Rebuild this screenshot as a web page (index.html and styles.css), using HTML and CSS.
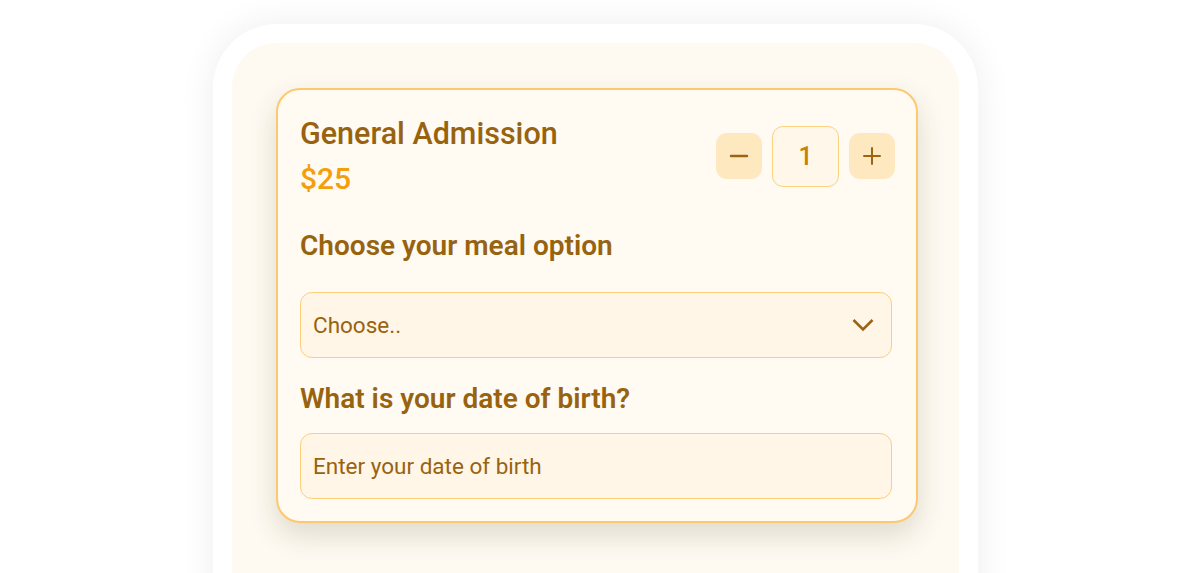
FILE: index.html
```html
<!DOCTYPE html>
<html lang="en">
<head>
<meta charset="utf-8">
<title>Ticket</title>
<link rel="stylesheet" href="styles.css">
</head>
<body>
<div class="frame">
  <div class="panel">
    <div class="card">
      <div class="head">
        <div class="info">
          <div class="title">General Admission</div>
          <div class="price">$25</div>
        </div>
        <div class="stepper">
          <button class="step" aria-label="decrease">
            <svg width="20" height="20" viewBox="0 0 20 20"><path d="M2 10h16" stroke="#9a6414" stroke-width="2.4" stroke-linecap="round"/></svg>
          </button>
          <div class="count">1</div>
          <button class="step" aria-label="increase">
            <svg width="20" height="20" viewBox="0 0 20 20"><path d="M2 10h16M10 2v16" stroke="#9a6414" stroke-width="2" stroke-linecap="round"/></svg>
          </button>
        </div>
      </div>
      <div class="label meal">Choose your meal option</div>
      <div class="field select">
        <span>Choose..</span>
        <svg width="24" height="16" viewBox="0 0 24 16"><path d="M2.5 3l9.5 9.5L21.5 3" fill="none" stroke="#9a6414" stroke-width="2.6" stroke-linejoin="miter"/></svg>
      </div>
      <div class="label dob">What is your date of birth?</div>
      <div class="field input"><span>Enter your date of birth</span></div>
    </div>
  </div>
</div>
</body>
</html>
```
FILE: styles.css
```css
html, body {
  margin: 0;
  padding: 0;
  background: #ffffff;
  font-family: Roboto, "Liberation Sans", sans-serif;
  overflow: hidden;
  height: 573px;
}
.frame {
  width: 765px;
  margin: 24px auto 0;
  height: 640px;
  box-sizing: border-box;
  padding: 19px 19px 0;
  background: #ffffff;
  border-radius: 64px;
  box-shadow: 0 0 36px rgba(0, 0, 0, 0.07);
}
.panel {
  height: 100%;
  box-sizing: border-box;
  background: #fefaf1;
  border-radius: 44px;
  padding: 45px 41px 0 44px;
}
.card {
  background: #fffaf2;
  border: 2px solid #fdc86e;
  border-radius: 24px;
  padding: 26px 24px 22px 22px;
  box-shadow: 0 12px 28px rgba(60, 50, 20, 0.16);
}
.head {
  display: flex;
  align-items: center;
  justify-content: space-between;
}
.title {
  font-size: 30.5px;
  font-weight: 500;
  color: #98630f;
  line-height: 35px;
}
.price {
  font-size: 30px;
  font-weight: 500;
  color: #f59e0b;
  line-height: 35px;
  margin-top: 10px;
}
.stepper {
  display: flex;
  align-items: center;
  gap: 10px;
  margin-right: -3px;
}
.step {
  width: 46px;
  height: 46px;
  border: none;
  border-radius: 11px;
  background: #fee8c0;
  display: flex;
  align-items: center;
  justify-content: center;
  padding: 0;
}
.count {
  width: 67px;
  height: 61px;
  box-sizing: border-box;
  border: 1.5px solid #fdd27f;
  border-radius: 11px;
  background: #fff7e9;
  display: flex;
  align-items: center;
  justify-content: center;
  font-size: 25px;
  font-weight: 500;
  color: #c98100;
}
.label {
  font-size: 28px;
  font-weight: 600;
  color: #98630f;
  line-height: 33px;
}
.meal {
  margin-top: 33px;
}
.dob {
  margin-top: 24px;
}
.field {
  height: 66px;
  box-sizing: border-box;
  border: 1.5px solid #fdcf7c;
  border-radius: 12px;
  background: #fff6e8;
  display: flex;
  align-items: center;
  justify-content: space-between;
  padding: 0 16px 0 12px;
  font-size: 22.5px;
  color: #98630f;
}
.select {
  margin-top: 30px;
}
.input {
  margin-top: 18px;
}
```
